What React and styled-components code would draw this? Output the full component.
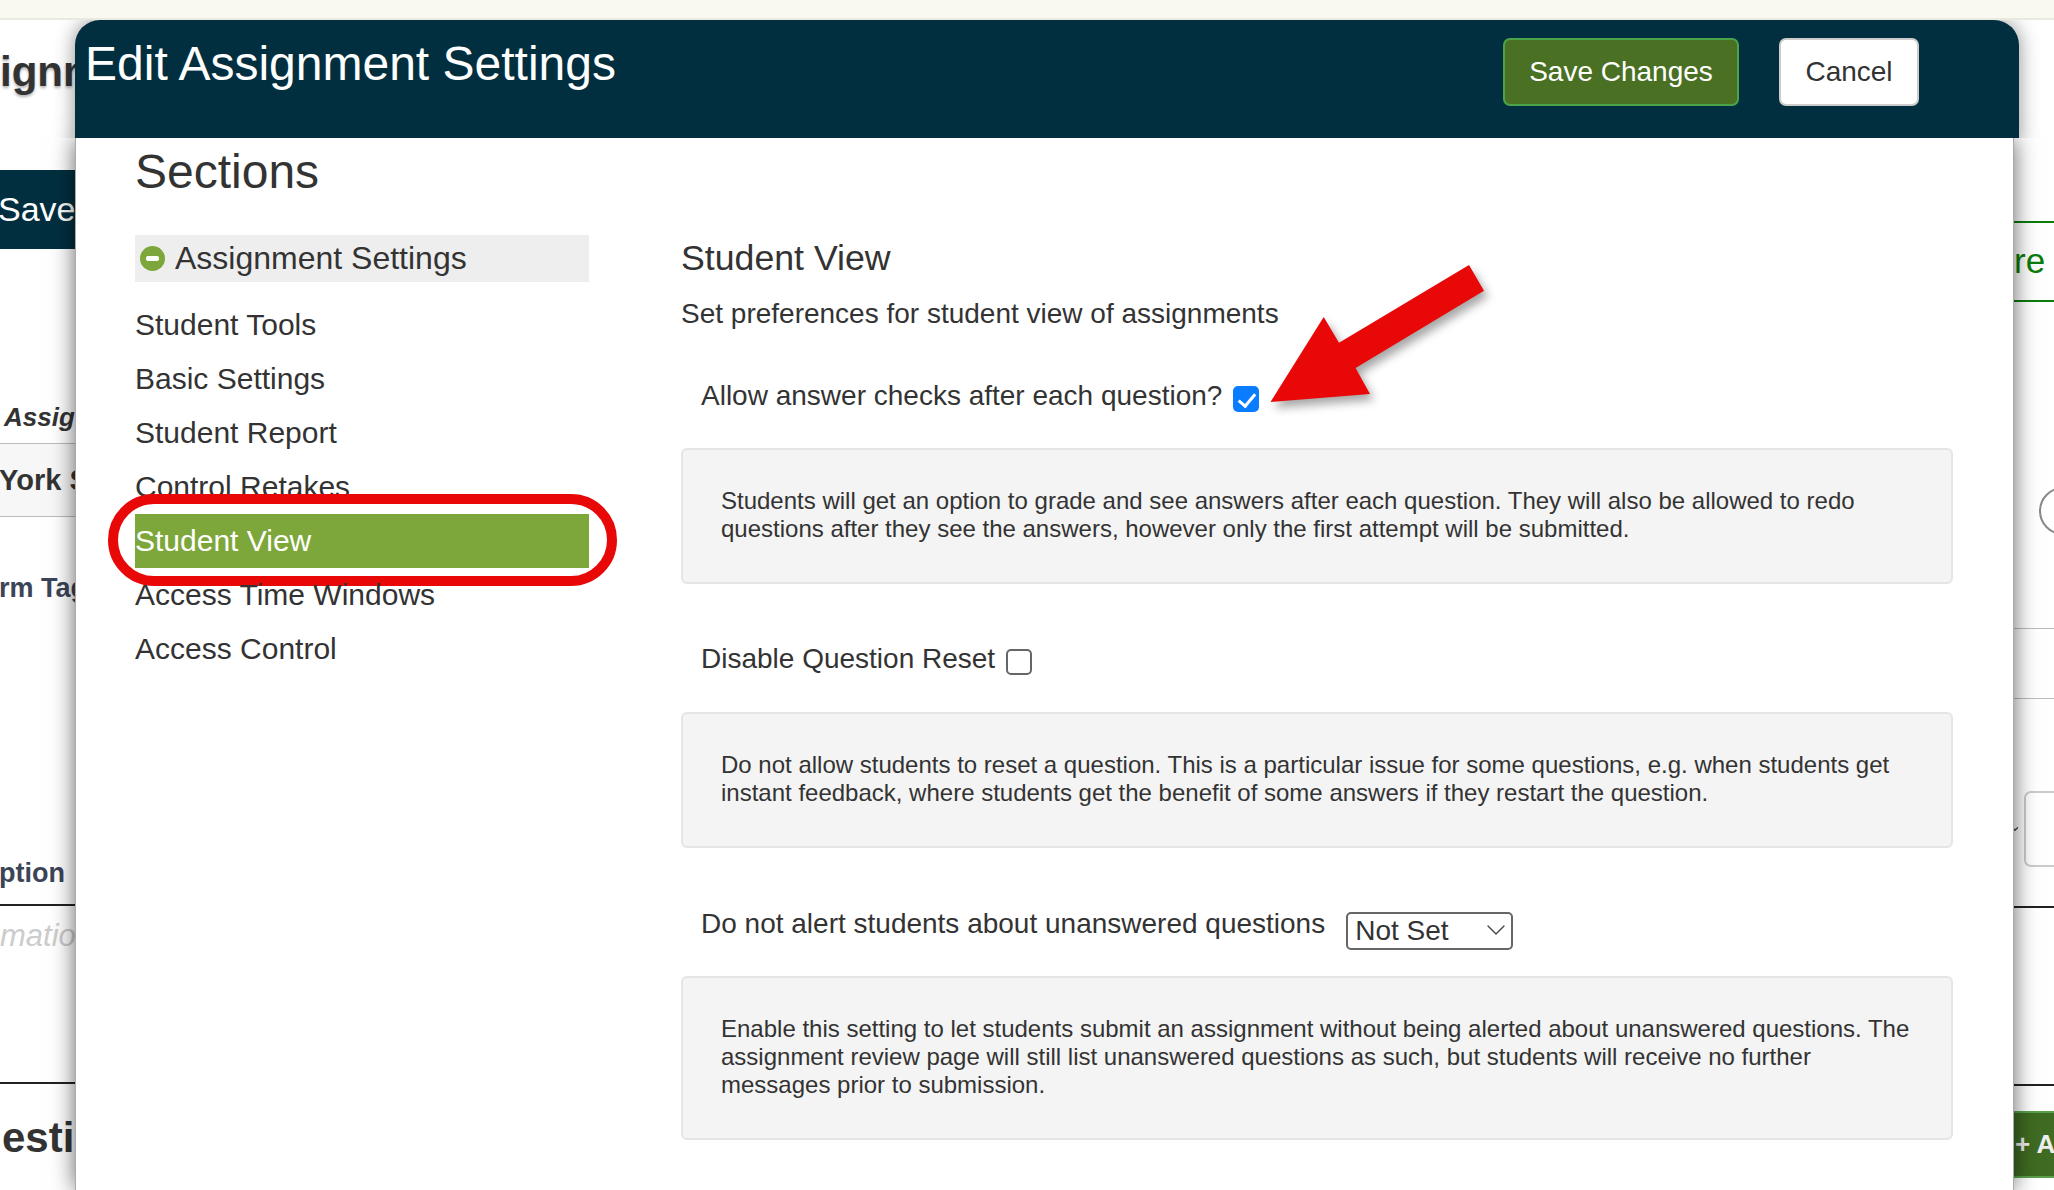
import React from 'react';
import styled, { createGlobalStyle } from 'styled-components';
import { ChevronDown } from 'lucide-react';

const GlobalStyle = createGlobalStyle`
    html, body {
        margin: 0;
        padding: 0;
        background: #ffffff;
    }
    body {
        font-family: "Liberation Sans", Arial, sans-serif;
        color: #333333;
    }
`;

const Page = styled.div`
    position: relative;
    width: 2054px;
    height: 1190px;
    overflow: hidden;
    background: #ffffff;
`;

const TopBar = styled.div`
    height: 18px;
    background: #f9f9f1;
    border-bottom: 2px solid #e9e9de;
`;

// what is left visible of the page behind the dialog
const Behind = styled.div`
    display: flex;
    justify-content: space-between;
    height: 1170px;
`;

const LeftStrip = styled.div`
    width: 75px;
    overflow: hidden;
    display: flex;
    flex-direction: column;
`;

const RightStrip = styled.div`
    width: 41px;
    overflow: hidden;
    display: flex;
    flex-direction: column;
`;

const PageTitle = styled.div`
    margin-top: 22px;
    font-size: 42px;
    line-height: 60px;
    font-weight: bold;
    white-space: nowrap;
    text-shadow: 0 2px 3px rgba(0, 0, 0, 0.3);
`;

const SaveTab = styled.div`
    margin-top: 68px;
    height: 79px;
    flex-shrink: 0;
    background: #022f40;
    color: #ffffff;
    font-size: 34px;
    line-height: 79px;
    white-space: nowrap;
    text-indent: -2px;
`;

const ItalicHead = styled.div`
    margin-top: 153px;
    padding: 0 0 11px 4px;
    border-bottom: 1px solid #bbbbbb;
    font-size: 26px;
    line-height: 30px;
    font-weight: bold;
    font-style: italic;
    white-space: nowrap;
`;

const TableRow = styled.div`
    height: 72px;
    flex-shrink: 0;
    background: #f7f7f7;
    border-bottom: 1px solid #bbbbbb;
    font-size: 29px;
    line-height: 72px;
    font-weight: bold;
    white-space: nowrap;
    text-indent: -1px;
`;

const FieldLabel = styled.div`
    margin-top: ${(props) => props.$gap}px;
    padding-bottom: ${(props) => (props.$rule ? 11 : 0)}px;
    border-bottom: ${(props) => (props.$rule ? '2px solid #222222' : 'none')};
    flex-shrink: 0;
    color: #3c4458;
    font-size: 27px;
    line-height: 40px;
    font-weight: bold;
    white-space: nowrap;
    text-indent: -1px;
`;

const Placeholder = styled.div`
    margin-top: 10px;
    color: #cccccc;
    font-size: 31px;
    line-height: 40px;
    font-style: italic;
    white-space: nowrap;
`;

const BigHead = styled.div`
    margin-top: 126px;
    padding: 24px 0 0 2px;
    border-top: 2px solid #222222;
    font-size: 42px;
    line-height: 60px;
    font-weight: bold;
    white-space: nowrap;
`;

const GreenTab = styled.div`
    margin-top: 201px;
    height: 81px;
    flex-shrink: 0;
    box-sizing: border-box;
    border-top: 2px solid #0a7d0a;
    border-bottom: 2px solid #0a7d0a;
    padding-left: 1px;
    color: #0a7d0a;
    font-size: 35px;
    line-height: 76px;
`;

const RoundBadge = styled.div`
    margin: 185px 0 0 26px;
    width: 48px;
    height: 48px;
    flex-shrink: 0;
    box-sizing: border-box;
    border: 2px solid #888888;
    border-radius: 50%;
    color: #666666;
    font-size: 26px;
    line-height: 44px;
    text-align: center;
`;

const GreyRule = styled.div`
    margin-top: ${(props) => props.$gap}px;
    height: 1px;
    flex-shrink: 0;
    background: #bbbbbb;
`;

const InputRow = styled.div`
    display: flex;
    align-items: center;
    margin-top: 92px;
    height: 76px;
    flex-shrink: 0;
`;

const TinyArrow = styled(ChevronDown)`
    width: 10px;
    height: 10px;
    flex-shrink: 0;
    margin-left: -3px;
    color: #444444;
`;

const ClippedInput = styled.div`
    margin-left: 4px;
    width: 80px;
    height: 76px;
    flex-shrink: 0;
    box-sizing: border-box;
    border: 2px solid #cccccc;
    border-radius: 7px;
`;

const BlackRule = styled.div`
    margin-top: ${(props) => props.$gap}px;
    height: 2px;
    flex-shrink: 0;
    background: #222222;
`;

const AddButton = styled.div`
    margin-top: 25px;
    height: 67px;
    flex-shrink: 0;
    box-sizing: border-box;
    background: #3f6b22;
    border-top: 2px solid #5aa04a;
    border-bottom: 2px solid #5aa04a;
    padding-left: 2px;
    color: #eeeeee;
    font-size: 26px;
    line-height: 63px;
    font-weight: bold;
    white-space: nowrap;
`;

const Modal = styled.div`
    position: absolute;
    top: 20px;
    left: 75px;
    width: 1944px;
    height: 1170px;
    display: flex;
    flex-direction: column;
`;

const ModalHeader = styled.header`
    height: 118px;
    flex-shrink: 0;
    display: flex;
    justify-content: space-between;
    align-items: flex-start;
    padding: 0 100px 0 10px;
    box-sizing: border-box;
    background: #022f40;
    border-radius: 25px 25px 0 0;
    box-shadow: 0 0 20px rgba(0, 0, 0, 0.45);
    clip-path: inset(0 -40px 0 -40px);
    position: relative;
`;

const ModalTitle = styled.h1`
    margin: 18px 0 0;
    color: #ffffff;
    font-size: 48px;
    line-height: 52px;
    font-weight: normal;
`;

const HeaderButtons = styled.div`
    display: flex;
    gap: 40px;
    margin-top: 18px;
`;

const Button = styled.button`
    width: ${(props) => props.$width}px;
    height: 68px;
    box-sizing: border-box;
    border-radius: 7px;
    border: 2px solid ${(props) => (props.$primary ? '#4aa54a' : '#cccccc')};
    background: ${(props) => (props.$primary ? '#4a7023' : '#ffffff')};
    color: ${(props) => (props.$primary ? '#ffffff' : '#333333')};
    font-family: inherit;
    font-size: 28px;
    padding: 0;
`;

const ModalBody = styled.div`
    flex: 1;
    width: 1939px;
    box-sizing: border-box;
    display: flex;
    gap: 92px;
    padding: 8px 60px 0 59px;
    background: #ffffff;
    border-right: 1px solid #aaaaaa;
    border-left: 1px solid #aaaaaa;
    box-shadow: 0 0 22px rgba(0, 0, 0, 0.6);
`;

const Sidebar = styled.nav`
    width: 454px;
    flex-shrink: 0;
`;

const SidebarTitle = styled.h2`
    margin: 0 0 37px;
    font-size: 48px;
    line-height: 52px;
    font-weight: normal;
`;

const SectionHead = styled.div`
    height: 47px;
    display: flex;
    align-items: center;
    gap: 10px;
    padding-left: 5px;
    margin-bottom: 16px;
    background: #eeeeee;
    font-size: 32px;
`;

const MinusIcon = styled.span`
    width: 25px;
    height: 25px;
    border-radius: 50%;
    background: #7da73a;
    display: flex;
    align-items: center;
    justify-content: center;

    &::after {
        content: '';
        width: 13px;
        height: 5px;
        border-radius: 2px;
        background: #ffffff;
    }
`;

const NavItem = styled.div`
    position: relative;
    height: 54px;
    font-size: 30px;
    line-height: 54px;
    background: ${(props) => (props.$active ? '#7da73a' : 'transparent')};
    color: ${(props) => (props.$active ? '#ffffff' : '#333333')};
`;

// red marker drawn on top of the screenshot
const HighlightRing = styled.span`
    position: absolute;
    top: -20px;
    right: -28px;
    bottom: -18px;
    left: -27px;
    border: 10px solid #e90808;
    border-radius: 50px;
`;

const Main = styled.main`
    flex: 1;
    min-width: 0;
    padding-top: 92px;
`;

const MainTitle = styled.h3`
    margin: 0;
    font-size: 35.7px;
    line-height: 40px;
    font-weight: normal;
`;

const MainSubtitle = styled.p`
    margin: 16px 0 0;
    font-size: 28px;
    line-height: 40px;
`;

const SettingRow = styled.div`
    display: flex;
    align-items: flex-start;
    height: 40px;
    margin: ${(props) => props.$top}px 0 ${(props) => props.$below}px;
    padding-left: 20px;
    font-size: 28px;
    line-height: 40px;
`;

const Checkbox = styled.input.attrs({ type: 'checkbox' })`
    appearance: none;
    position: relative;
    width: 26px;
    height: 26px;
    margin: 10px 0 0 11px;
    box-sizing: border-box;
    border: 2px solid #666666;
    border-radius: 5px;
    background: #ffffff;

    &:checked {
        border: none;
        background: #0a7cff;
    }

    &:checked::after {
        content: '';
        position: absolute;
        left: 9px;
        top: 4px;
        width: 7px;
        height: 14px;
        border: solid #ffffff;
        border-width: 0 3px 3px 0;
        transform: rotate(40deg);
    }
`;

const SelectWrap = styled.div`
    position: relative;
    width: 167px;
    height: 38px;
    margin: 7px 0 0 21px;
`;

const Select = styled.select`
    appearance: none;
    width: 100%;
    height: 100%;
    box-sizing: border-box;
    padding: 0 0 0 7px;
    border: 2px solid #666666;
    border-radius: 5px;
    background: #ffffff;
    color: #333333;
    font-family: inherit;
    font-size: 28px;
`;

const SelectArrow = styled(ChevronDown)`
    position: absolute;
    top: 3px;
    right: 1px;
    width: 32px;
    height: 32px;
    color: #444444;
    pointer-events: none;
`;

const InfoPanel = styled.div`
    padding: 37px 40px 39px 38px;
    border: 2px solid #e5e5e5;
    border-radius: 6px;
    background: #f4f4f4;
    font-size: 24px;
    line-height: 28px;
`;

const Arrow = styled.svg`
    position: absolute;
    left: 1185px;
    top: 235px;
    width: 240px;
    height: 160px;
    overflow: visible;
    filter: drop-shadow(4px 6px 5px rgba(0, 0, 0, 0.35));
`;

const NAV_ITEMS = ['Student Tools', 'Basic Settings', 'Student Report', 'Control Retakes', 'Student View', 'Access Time Windows', 'Access Control'];

const App = () => {
    return (
        <>
            <GlobalStyle />
            <Page>
                <TopBar />
                <Behind>
                    <LeftStrip>
                        <PageTitle>ignment</PageTitle>
                        <SaveTab>Save</SaveTab>
                        <ItalicHead>Assign</ItalicHead>
                        <TableRow>York State</TableRow>
                        <FieldLabel $gap={51}>rm Tags</FieldLabel>
                        <FieldLabel $gap={245} $rule>ption</FieldLabel>
                        <Placeholder>mation</Placeholder>
                        <BigHead>estions</BigHead>
                    </LeftStrip>
                    <RightStrip>
                        <GreenTab>re</GreenTab>
                        <RoundBadge>1</RoundBadge>
                        <GreyRule $gap={93} />
                        <GreyRule $gap={69} />
                        <InputRow>
                            <TinyArrow strokeWidth={3} />
                            <ClippedInput />
                        </InputRow>
                        <BlackRule $gap={39} />
                        <BlackRule $gap={176} />
                        <AddButton>+ Add</AddButton>
                    </RightStrip>
                </Behind>

                <Modal>
                    <ModalHeader>
                        <ModalTitle>Edit Assignment Settings</ModalTitle>
                        <HeaderButtons>
                            <Button $primary $width={236}>Save Changes</Button>
                            <Button $width={140}>Cancel</Button>
                        </HeaderButtons>
                    </ModalHeader>
                    <ModalBody>
                        <Sidebar>
                            <SidebarTitle>Sections</SidebarTitle>
                            <SectionHead>
                                <MinusIcon />
                                Assignment Settings
                            </SectionHead>
                            {NAV_ITEMS.map((item) => (
                                <NavItem key={item} $active={item === 'Student View'}>
                                    {item}
                                    {item === 'Student View' && <HighlightRing />}
                                </NavItem>
                            ))}
                        </Sidebar>
                        <Main>
                            <MainTitle>Student View</MainTitle>
                            <MainSubtitle>Set preferences for student view of assignments</MainSubtitle>

                            <SettingRow $top={42} $below={32}>
                                Allow answer checks after each question?
                                <Checkbox defaultChecked />
                            </SettingRow>
                            <InfoPanel>
                                Students will get an option to grade and see answers after each question. They will also be allowed to redo
                                questions after they see the answers, however only the first attempt will be submitted.
                            </InfoPanel>

                            <SettingRow $top={55} $below={33}>
                                Disable Question Reset
                                <Checkbox />
                            </SettingRow>
                            <InfoPanel>
                                Do not allow students to reset a question. This is a particular issue for some questions, e.g. when students get
                                instant feedback, where students get the benefit of some answers if they restart the question.
                            </InfoPanel>

                            <SettingRow $top={56} $below={32}>
                                Do not alert students about unanswered questions
                                <SelectWrap>
                                    <Select defaultValue="Not Set">
                                        <option>Not Set</option>
                                    </Select>
                                    <SelectArrow strokeWidth={1} />
                                </SelectWrap>
                            </SettingRow>
                            <InfoPanel>
                                Enable this setting to let students submit an assignment without being alerted about unanswered questions. The
                                assignment review page will still list unanswered questions as such, but students will receive no further
                                messages prior to submission.
                            </InfoPanel>
                        </Main>
                    </ModalBody>
                    <Arrow viewBox="0 0 240 160">
                        <polygon points="10.5,147 63.7,62 79,87.7 209,10 224,35.7 95.6,113 110,139" fill="#e90808" />
                    </Arrow>
                </Modal>
            </Page>
        </>
    );
};

export default App;
